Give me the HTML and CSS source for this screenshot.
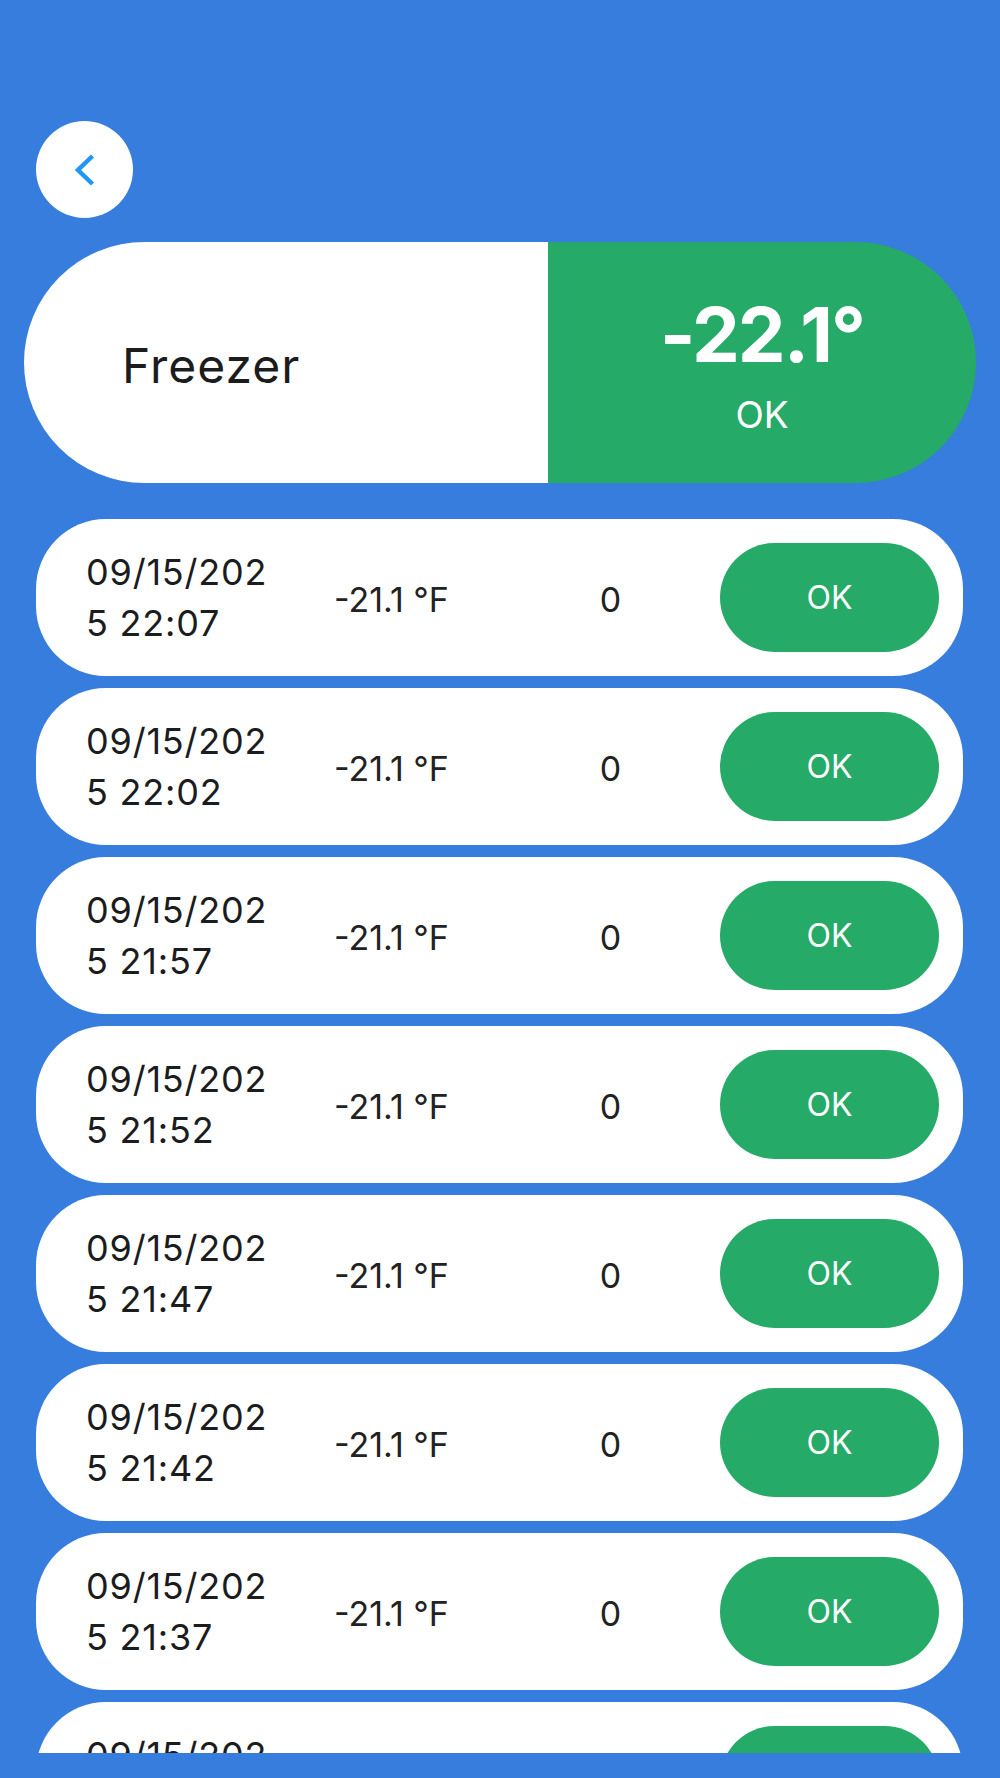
FILE: index.html
```html
<!DOCTYPE html>
<html>
<head>
    <link rel="stylesheet" href="styles.css">
</head>
<body>
<div class="screen">
    <div class="top-bar">
        <button class="back-btn">
            <svg width="24" height="34" viewBox="0 0 24 34">
                <path d="M19.5 3 L5 17 L19.5 31" fill="none" stroke="#2196f3" stroke-width="4.5"/>
            </svg>
        </button>
    </div>

    <div class="summary">
        <div class="summary-name">Freezer</div>
        <div class="summary-status">
            <div class="summary-temp">-22.1°</div>
            <div class="summary-label">OK</div>
        </div>
    </div>

    <div class="log-list">
        <div class="log-row">
            <div class="log-date">09/15/2025 22:07</div>
            <div class="log-temp">-21.1 °F</div>
            <div class="log-count">0</div>
            <div class="log-badge">OK</div>
        </div>
        <div class="log-row">
            <div class="log-date">09/15/2025 22:02</div>
            <div class="log-temp">-21.1 °F</div>
            <div class="log-count">0</div>
            <div class="log-badge">OK</div>
        </div>
        <div class="log-row">
            <div class="log-date">09/15/2025 21:57</div>
            <div class="log-temp">-21.1 °F</div>
            <div class="log-count">0</div>
            <div class="log-badge">OK</div>
        </div>
        <div class="log-row">
            <div class="log-date">09/15/2025 21:52</div>
            <div class="log-temp">-21.1 °F</div>
            <div class="log-count">0</div>
            <div class="log-badge">OK</div>
        </div>
        <div class="log-row">
            <div class="log-date">09/15/2025 21:47</div>
            <div class="log-temp">-21.1 °F</div>
            <div class="log-count">0</div>
            <div class="log-badge">OK</div>
        </div>
        <div class="log-row">
            <div class="log-date">09/15/2025 21:42</div>
            <div class="log-temp">-21.1 °F</div>
            <div class="log-count">0</div>
            <div class="log-badge">OK</div>
        </div>
        <div class="log-row">
            <div class="log-date">09/15/2025 21:37</div>
            <div class="log-temp">-21.1 °F</div>
            <div class="log-count">0</div>
            <div class="log-badge">OK</div>
        </div>
        <div class="log-row">
            <div class="log-date">09/15/2025 21:32</div>
            <div class="log-temp">-21.1 °F</div>
            <div class="log-count">0</div>
            <div class="log-badge">OK</div>
        </div>
    </div>
</div>
</body>
</html>
```

FILE: styles.css
```css
body {
    margin: 0;
    padding: 0;
    background: #377dde;
    font-family: Inter, "Noto Sans", sans-serif;
    color: #1b1c1e;
}

.screen {
    height: 1778px;
    display: flex;
    flex-direction: column;
    box-sizing: border-box;
    padding-bottom: 25px;
}

.top-bar {
    padding: 121px 0 0 36px;
    height: 97px;
}

.back-btn {
    width: 97px;
    height: 97px;
    border-radius: 50%;
    border: none;
    background: #fff;
    padding: 0;
    display: flex;
    align-items: center;
    justify-content: center;
    cursor: pointer;
}

.summary {
    margin: 24px 24px 0 24px;
    height: 241px;
    display: flex;
    border-radius: 121px;
    overflow: hidden;
}

.summary-name {
    width: 524px;
    background: #fff;
    display: flex;
    align-items: center;
    padding-left: 98px;
    box-sizing: border-box;
    font-size: 48px;
    letter-spacing: 1px;
    padding-top: 6px;
}

.summary-status {
    flex: 1;
    background: #25aa67;
    color: #fff;
    display: flex;
    flex-direction: column;
    align-items: center;
    justify-content: center;
    padding-top: 4px;
}

.summary-temp {
    font-size: 76px;
    font-weight: 700;
    line-height: 84px;
    letter-spacing: -2px;
}

.summary-label {
    font-size: 37px;
    line-height: 46px;
    margin-top: 16px;
}

.log-list {
    margin-top: 36px;
    flex: 1;
    overflow: hidden;
    display: flex;
    flex-direction: column;
    gap: 12px;
}

.log-row {
    flex-shrink: 0;
    margin: 0 37px 0 36px;
    height: 157px;
    box-sizing: border-box;
    background: #fff;
    border-radius: 70px;
    padding: 24px 24px 24px 50px;
    display: grid;
    grid-template-columns: 196px 1fr 1fr 219px;
    align-items: center;
}

.log-date {
    font-size: 36px;
    line-height: 51px;
    word-break: break-all;
    letter-spacing: 0.8px;
}

.log-temp,
.log-count {
    font-size: 34px;
    text-align: center;
    padding-top: 4px;
    color: #222;
}

.log-badge {
    height: 109px;
    border-radius: 55px;
    background: #25aa67;
    color: #fff;
    font-size: 32px;
    display: flex;
    align-items: center;
    justify-content: center;
}
```
